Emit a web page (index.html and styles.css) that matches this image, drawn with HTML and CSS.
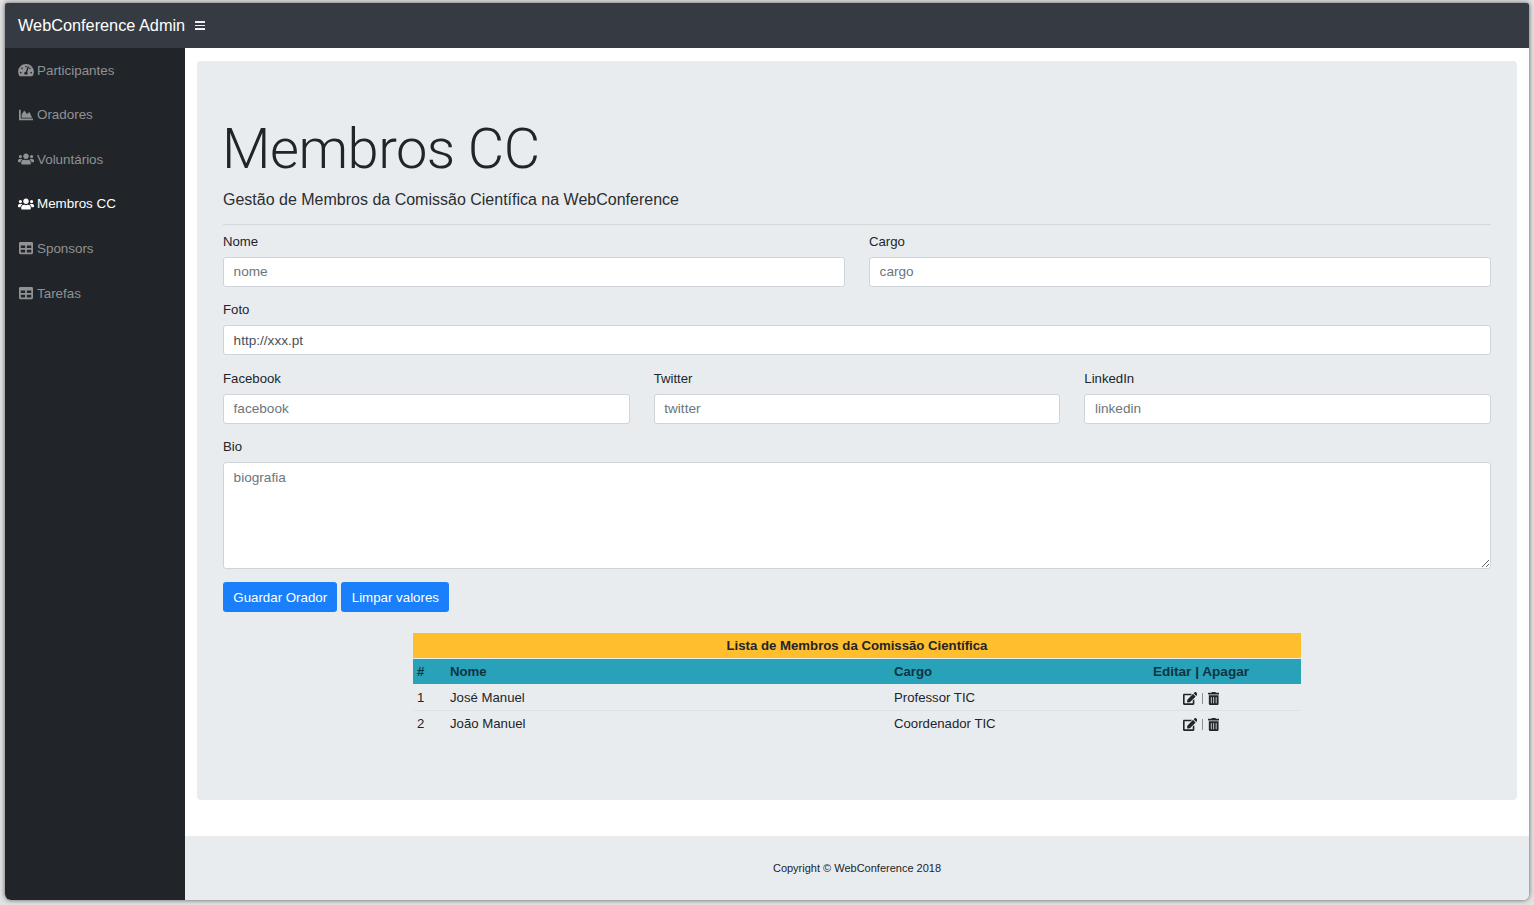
FILE: index.html
```html
<!DOCTYPE html>
<html lang="pt">
<head>
<meta charset="utf-8">
<title>WebConference Admin</title>
<link rel="stylesheet" href="styles.css">
</head>
<body>
<svg class="defs" width="0" height="0" aria-hidden="true">
  <symbol id="i-tach" viewBox="0 0 576 512"><path d="M288 32C128.94 32 0 160.94 0 320c0 52.8 14.25 102.26 39.06 144.8 5.61 9.62 16.3 15.2 27.44 15.2h443c11.14 0 21.83-5.58 27.44-15.2C561.75 422.26 576 372.8 576 320c0-159.06-128.94-288-288-288zm0 64c14.71 0 26.58 10.13 30.32 23.65-1.11 2.26-2.64 4.23-3.45 6.67l-9.22 27.67c-5.13 3.49-10.97 6.01-17.64 6.01-17.67 0-32-14.33-32-32S270.33 96 288 96zM96 384c-17.67 0-32-14.33-32-32s14.33-32 32-32 32 14.33 32 32-14.33 32-32 32zm48-160c-17.67 0-32-14.33-32-32s14.33-32 32-32 32 14.33 32 32-14.33 32-32 32zm246.77-72.41l-61.33 184C343.13 347.33 352 364.54 352 384c0 11.72-3.38 22.55-8.88 32H232.88c-5.5-9.45-8.88-20.28-8.88-32 0-33.94 26.5-61.43 59.9-63.59l61.34-184.01c4.17-12.56 17.73-19.45 30.36-15.17 12.57 4.19 19.35 17.79 15.17 30.36zm14.66 57.2l15.52-46.55c3.47-1.29 7.13-2.23 11.05-2.23 17.67 0 32 14.33 32 32s-14.33 32-32 32c-11.38 0-20.89-6.28-26.57-15.22zM480 384c-17.67 0-32-14.33-32-32s14.33-32 32-32 32 14.33 32 32-14.33 32-32 32z"/></symbol>
  <symbol id="i-chart" viewBox="0 0 512 512"><path d="M500 384c6.6 0 12 5.4 12 12v40c0 6.6-5.4 12-12 12H12c-6.6 0-12-5.4-12-12V76c0-6.6 5.4-12 12-12h40c6.6 0 12 5.4 12 12v308h436zM372.7 159.5L288 216l-85.3-113.7c-5.1-6.8-15.5-6.3-19.9 1L96 248v104h384l-89.9-187.8c-3.2-6.5-11.4-8.7-17.4-4.7z"/></symbol>
  <symbol id="i-users" viewBox="0 0 640 512"><path d="M96 224c35.3 0 64-28.7 64-64s-28.7-64-64-64-64 28.7-64 64 28.7 64 64 64zm448 0c35.3 0 64-28.7 64-64s-28.7-64-64-64-64 28.7-64 64 28.7 64 64 64zm32 32h-64c-17.6 0-33.5 7.1-45.1 18.6 40.3 22.1 68.9 62 75.1 109.4h66c17.7 0 32-14.3 32-32v-32c0-35.3-28.7-64-64-64zm-256 0c61.9 0 112-50.1 112-112S381.9 32 320 32 208 82.1 208 144s50.1 112 112 112zm76.8 32h-8.3c-20.8 10-43.9 16-68.5 16s-47.6-6-68.5-16h-8.3C179.6 288 128 339.6 128 403.2V432c0 26.5 21.5 48 48 48h288c26.5 0 48-21.5 48-48v-28.8c0-63.6-51.6-115.2-115.2-115.2zm-223.7-13.4C161.5 263.1 145.6 256 128 256H64c-35.3 0-64 28.7-64 64v32c0 17.7 14.3 32 32 32h65.9c6.3-47.4 34.9-87.3 75.2-109.4z"/></symbol>
  <symbol id="i-table" viewBox="0 0 512 512"><path d="M464 32H48C21.49 32 0 53.49 0 80v352c0 26.51 21.49 48 48 48h416c26.51 0 48-21.49 48-48V80c0-26.51-21.49-48-48-48zM224 416H64v-96h160v96zm0-160H64v-96h160v96zm224 160H288v-96h160v96zm0-160H288v-96h160v96z"/></symbol>
  <symbol id="i-edit" viewBox="0 0 576 512"><path d="M402.6 83.2l90.2 90.2c3.8 3.8 3.8 10 0 13.8L274.4 405.6l-92.8 10.3c-12.4 1.4-22.9-9.1-21.5-21.5l10.3-92.8L388.8 83.2c3.8-3.8 10-3.8 13.8 0zm162-22.9l-48.8-48.8c-15.2-15.2-39.9-15.2-55.2 0l-35.4 35.4c-3.8 3.8-3.8 10 0 13.8l90.2 90.2c3.8 3.8 10 3.8 13.8 0l35.4-35.4c15.2-15.3 15.2-40 0-55.2zM384 346.2V448H64V128h229.8c3.2 0 6.2-1.3 8.5-3.5l40-40c7.6-7.6 2.2-20.5-8.5-20.5H48C21.5 64 0 85.5 0 112v352c0 26.5 21.5 48 48 48h352c26.5 0 48-21.5 48-48V306.2c0-10.7-12.9-16-20.5-8.5l-40 40c-2.2 2.3-3.5 5.3-3.5 8.5z"/></symbol>
  <symbol id="i-trash" viewBox="0 0 448 512"><path d="M32 464a48 48 0 0 0 48 48h288a48 48 0 0 0 48-48V128H32zm272-256a16 16 0 0 1 32 0v224a16 16 0 0 1-32 0zm-96 0a16 16 0 0 1 32 0v224a16 16 0 0 1-32 0zm-96 0a16 16 0 0 1 32 0v224a16 16 0 0 1-32 0zM432 32H312l-9.4-18.7A24 24 0 0 0 281.1 0H166.8a23.72 23.72 0 0 0-21.4 13.3L136 32H16A16 16 0 0 0 0 48v32a16 16 0 0 0 16 16h416a16 16 0 0 0 16-16V48a16 16 0 0 0-16-16z"/></symbol>
</svg>
<div class="window">
  <header class="topbar">
    <span class="brand">WebConference Admin</span>
    <span class="burger"><i></i><i></i><i></i></span>
  </header>
  <div class="body-row">
    <nav class="sidebar">
      <a class="nav-link"><svg class="nav-icon"><use href="#i-tach"/></svg>Participantes</a>
      <a class="nav-link"><svg class="nav-icon"><use href="#i-chart"/></svg>Oradores</a>
      <a class="nav-link"><svg class="nav-icon"><use href="#i-users"/></svg>Voluntários</a>
      <a class="nav-link active"><svg class="nav-icon"><use href="#i-users"/></svg>Membros CC</a>
      <a class="nav-link"><svg class="nav-icon"><use href="#i-table"/></svg>Sponsors</a>
      <a class="nav-link"><svg class="nav-icon"><use href="#i-table"/></svg>Tarefas</a>
    </nav>
    <div class="main">
      <section class="jumbotron">
        <h1 class="title">Membros CC</h1>
        <p class="lead">Gestão de Membros da Comissão Científica na WebConference</p>
        <hr class="rule">
        <form class="form">
          <div class="row cols-2">
            <div class="field"><label>Nome</label><input class="control" placeholder="nome"></div>
            <div class="field"><label>Cargo</label><input class="control" placeholder="cargo"></div>
          </div>
          <div class="row">
            <div class="field"><label>Foto</label><input class="control" value="http://xxx.pt"></div>
          </div>
          <div class="row cols-3">
            <div class="field"><label>Facebook</label><input class="control" placeholder="facebook"></div>
            <div class="field"><label>Twitter</label><input class="control" placeholder="twitter"></div>
            <div class="field"><label>LinkedIn</label><input class="control" placeholder="linkedin"></div>
          </div>
          <div class="row">
            <div class="field"><label>Bio</label><textarea class="control area" placeholder="biografia"></textarea></div>
          </div>
          <div class="buttons">
            <button type="button" class="btn">Guardar Orador</button>
            <button type="button" class="btn">Limpar valores</button>
          </div>
        </form>
        <table class="list">
          <colgroup><col class="c-num"><col class="c-name"><col class="c-role"><col class="c-act"></colgroup>
          <thead>
            <tr class="caption-row"><th colspan="4">Lista de Membros da Comissão Científica</th></tr>
            <tr class="head-row"><th>#</th><th>Nome</th><th>Cargo</th><th class="center wide">Editar | Apagar</th></tr>
          </thead>
          <tbody>
            <tr><td>1</td><td>José Manuel</td><td>Professor TIC</td><td class="center"><span class="actions"><svg class="act act-edit"><use href="#i-edit"/></svg><span class="sep"></span><svg class="act act-trash"><use href="#i-trash"/></svg></span></td></tr>
            <tr><td>2</td><td>João Manuel</td><td>Coordenador TIC</td><td class="center"><span class="actions"><svg class="act act-edit"><use href="#i-edit"/></svg><span class="sep"></span><svg class="act act-trash"><use href="#i-trash"/></svg></span></td></tr>
          </tbody>
        </table>
      </section>
      <footer class="footer">Copyright © WebConference 2018</footer>
    </div>
  </div>
</div>
</body>
</html>
```
FILE: styles.css
```css
* { box-sizing: border-box; }
html, body { height: 100%; }
body {
  margin: 0;
  padding: 3px 5px 5px;
  background: #e2e2e2;
  font-family: "Liberation Sans", Arial, sans-serif;
  font-size: 13.2px;
  color: #212529;
  overflow: hidden;
}
.defs { display: block; height: 0; }
.window {
  height: 897px;
  display: flex;
  flex-direction: column;
  background: #fff;
  border-radius: 2px 2px 6px 6px;
  overflow: hidden;
  box-shadow: 0 0 5px rgba(0,0,0,.6);
}
.topbar {
  height: 45px;
  flex: none;
  display: flex;
  align-items: center;
  padding-left: 13px;
  background: #363b43;
}
.brand { width: 177px; font-size: 16.3px; color: #fff; }
.burger { width: 10px; display: flex; flex-direction: column; gap: 2px; }
.burger i { display: block; height: 1.5px; background: #eef0f2; }
.body-row { flex: 1; display: flex; min-height: 0; }
.sidebar { width: 180px; flex: none; background: #212529; }
.nav-link {
  display: flex;
  align-items: center;
  height: 44.6px;
  padding-left: 13px;
  color: #909294;
  font-size: 13.4px;
}
.nav-link:first-child { margin-top: -0.2px; }
.nav-link.active { color: #fff; }
.nav-icon { width: 16px; height: 14px; margin-right: 3px; fill: currentColor; }
.main { flex: 1; display: flex; flex-direction: column; min-width: 0; }
.jumbotron {
  margin: 13px 12px 36px;
  height: 739px;
  padding: 55px 26px 0;
  background: #e9ecef;
  border-radius: 4px;
}
.title {
  margin: 0 0 0 -1px;
  font-family: Roboto, "Liberation Sans", sans-serif;
  font-size: 56px;
  font-weight: 300;
  line-height: 67px;
  letter-spacing: -0.5px;
}
.lead { margin: 5px 0 0; font-size: 16px; line-height: 24px; color: #2a2e32; }
.rule { margin: 12px 0 4.9px; border: 0; border-top: 1px solid #d5d8db; }
.row { display: grid; gap: 24px; margin-bottom: 11.5px; }
.cols-2 { grid-template-columns: 1fr 1fr; }
.cols-3 { grid-template-columns: 1fr 1fr 1fr; }
.field { display: flex; flex-direction: column; }
.field label { line-height: 24px; margin-bottom: 3px; }
.control {
  display: block;
  width: 100%;
  height: 30px;
  padding: 0 9.6px;
  border: 1px solid #ced4da;
  border-radius: 3px;
  background: #fff;
  font-family: inherit;
  font-size: 13.6px;
  color: #495057;
}
.control::placeholder { color: #6c757d; opacity: 1; }
.area { height: 107px; padding-top: 4px; line-height: 21px; }
.buttons { display: flex; gap: 4px; margin-top: 13px; }
.btn {
  height: 30px;
  padding: 0 10.3px;
  border: 0;
  border-radius: 3px;
  background: #1a7ffb;
  color: #fff;
  font-family: inherit;
  font-size: 13.3px;
}
.list {
  width: 888px;
  margin: 20.6px auto 0;
  border-collapse: separate;
  border-spacing: 0;
  table-layout: fixed;
}
.c-num { width: 33px; }
.c-name { width: 444px; }
.c-role { width: 211px; }
.c-act { width: 200px; }
.list th, .list td { padding: 0 4px; text-align: left; height: 25px; }
.list tbody tr:first-child td { height: 27px; padding-top: 1px; border-bottom: 1px solid #dee2e6; }
.list .center { text-align: center; }
.caption-row th { height: 26px; background: #ffbe2e; text-align: center; border-bottom: 1px solid #e9ecef; }
.head-row th { background: #27a2b9; color: #0f3442; height: 25px; }
.list .wide { font-size: 13.6px; }
.actions { display: inline-flex; align-items: center; gap: 5px; vertical-align: middle; }
.act { height: 13px; fill: #212529; }
.act-edit { width: 14.6px; }
.act-trash { width: 11.4px; }
.sep { width: 1px; height: 11px; background: #8f9194; }
.footer {
  margin-top: auto;
  height: 64px;
  flex: none;
  display: flex;
  align-items: center;
  justify-content: center;
  background: #e9ecef;
  font-size: 11px;
}
```
